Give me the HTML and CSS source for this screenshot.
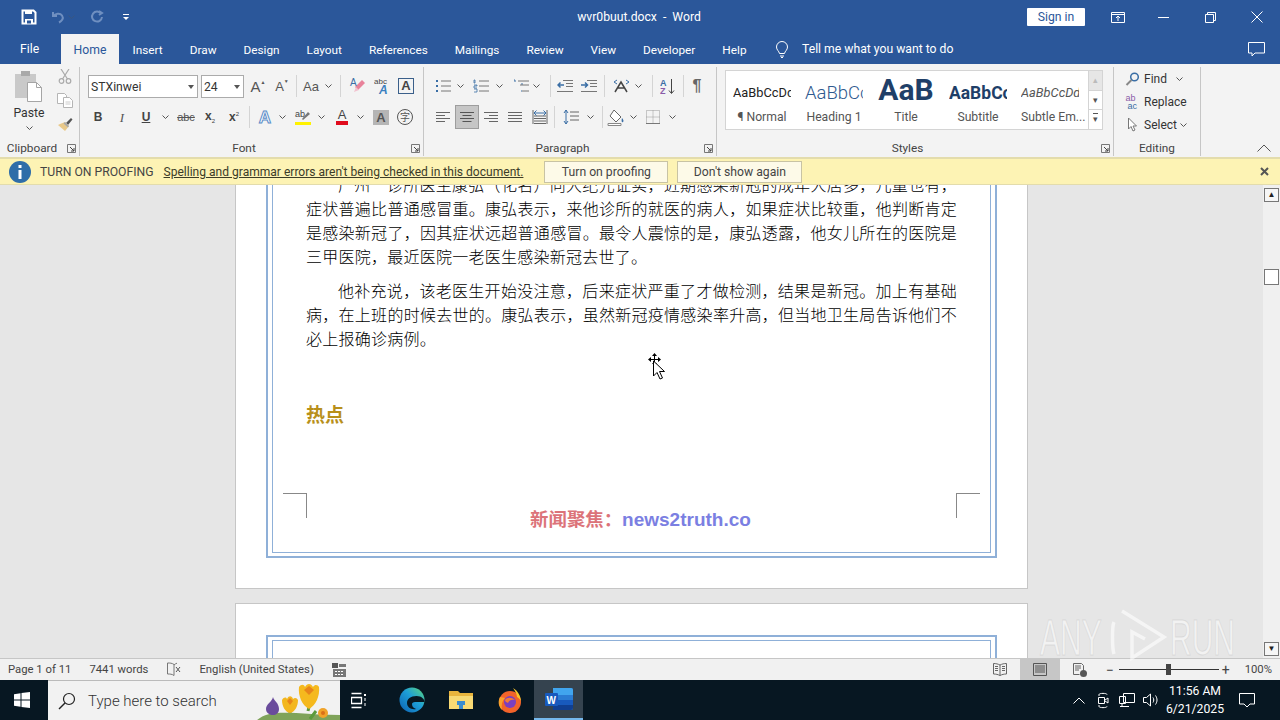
FILE: index.html
```html
<!DOCTYPE html>
<html lang="en">
<head>
  <meta charset="UTF-8">
  <title>wvr0buut.docx - Word</title>
  <link rel="stylesheet" href="styles.css">
</head>
<body>
  <svg class="defs" width="0" height="0">
    <symbol id="chev" viewBox="0 0 7 4"><path d="M.5.5 3.5 3.5 6.5.5" fill="none" stroke="#555" stroke-width="1"/></symbol>
    <symbol id="launch" viewBox="0 0 9 9"><path d="M.5.5h8v8h-8z" fill="none" stroke="#777"/><path d="M3 3l4 4M7 4v3H4" fill="none" stroke="#444"/></symbol>
  </svg>

  <header class="titlebar">
    <div class="qat">
      <svg class="qat-save" width="16" height="16" viewBox="0 0 16 16"><path d="M1.5 1.5h11l2 2v11h-13z" fill="none" stroke="#fff" stroke-width="2"/><path d="M4 1h7v4H4zM4 10h8v5H4z" fill="#fff"/><path d="M6 11.5h4v3H6z" fill="#2b579a"/></svg>
      <svg class="qat-undo" width="14" height="14" viewBox="0 0 14 14"><path d="M2 2v4h4M2.5 6C4 3.500 9 2.500 11 5.500S11 11 8 12.500" fill="none" stroke="#6f8fc0" stroke-width="2"/></svg>
      <svg class="qat-chev" width="7" height="4"><use href="#chev" opacity=".35"/></svg>
      <svg class="qat-redo" width="14" height="14" viewBox="0 0 14 14"><path d="M9 1l3 2-3 2M11 3.500A5 5 0 1 0 12 7" fill="none" stroke="#6f8fc0" stroke-width="2"/></svg>
      <svg class="qat-more" width="8" height="8" viewBox="0 0 8 8"><path d="M1 1h6v1H1z" fill="#fff"/><path d="M1 4h6L4 7z" fill="#fff"/></svg>
    </div>
    <div class="doc-title">wvr0buut.docx&nbsp; - &nbsp;Word</div>
    <div class="win-ctrl">
      <button class="signin">Sign in</button>
      <svg class="wc-display" width="14" height="11" viewBox="0 0 14 11"><path d="M.5.500h13v10H.500zM.5 2.500h13" fill="none" stroke="#fff"/><path d="M7 9V4M5 6l2-2 2 2" fill="none" stroke="#fff"/></svg>
      <svg class="wc-min" width="11" height="1"><path d="M0 .5h11" stroke="#fff"/></svg>
      <svg class="wc-max" width="11" height="11" viewBox="0 0 11 11"><path d="M.5 2.500h8v8h-8zM2.500 2.500v-2h8v8h-2" fill="none" stroke="#fff"/></svg>
      <svg class="wc-close" width="12" height="12" viewBox="0 0 12 12"><path d="M.5.500l11 11M11.500.500l-11 11" stroke="#fff"/></svg>
    </div>
  </header>

  <nav class="tabs">
    <span class="tab tab-file">File</span>
    <span class="tab tab-active">Home</span>
    <span class="tab">Insert</span>
    <span class="tab">Draw</span>
    <span class="tab">Design</span>
    <span class="tab">Layout</span>
    <span class="tab">References</span>
    <span class="tab">Mailings</span>
    <span class="tab">Review</span>
    <span class="tab">View</span>
    <span class="tab">Developer</span>
    <span class="tab">Help</span>
    <svg class="bulb" width="14" height="17" viewBox="0 0 14 17"><path d="M4.500 12.500C4 10 1.500 9 1.500 6a5.500 5.500 0 0 1 11 0c0 3-2.500 4-3 6.500zM5 15h4M6 16.500h2" fill="none" stroke="#fff"/></svg>
    <span class="tell">Tell me what you want to do</span>
    <svg class="comment" width="17" height="15" viewBox="0 0 17 15"><path d="M.5.500h16v10.500H7l-3 3v-3H.500z" fill="none" stroke="#fff"/></svg>
  </nav>

  <section class="ribbon">
    <div class="grp grp-clip">
      <div class="clip-body">
        <div class="paste">
          <svg width="28" height="32" viewBox="0 0 28 32"><path d="M0 4h21v24H0z" fill="#c9c9c9"/><path d="M6 1h9v5H6z" fill="#a9a9a9"/><path d="M12.500 12.500h9l5 5v14h-14z" fill="#fff" stroke="#a5a5a5"/><path d="M21.500 12.500v5h5" fill="none" stroke="#a5a5a5"/></svg>
          <span>Paste</span>
          <svg class="paste-chev" width="7" height="4"><use href="#chev"/></svg>
        </div>
        <div class="clip-tools">
          <svg width="14" height="15" viewBox="0 0 14 15"><path d="M3 0l6.500 10M11 0 4.500 10" stroke="#aaa" stroke-width="1.200" fill="none"/><circle cx="3.500" cy="12" r="2.300" fill="none" stroke="#aaa" stroke-width="1.200"/><circle cx="10.500" cy="12" r="2.300" fill="none" stroke="#aaa" stroke-width="1.200"/></svg>
          <svg width="16" height="15" viewBox="0 0 16 15"><path d="M.5.500h7l2 2v8H.500z" fill="#fff" stroke="#b5b5b5"/><path d="M6.500 4.500h6l3 3v7h-9z" fill="#fff" stroke="#b5b5b5"/><path d="M8.500 9h5M8.500 11h5" stroke="#ccc"/></svg>
          <svg width="16" height="15" viewBox="0 0 16 15"><path d="M9 6l5-5 1.500 1.500L11 8z" fill="#555"/><path d="M8 5l4 4-4 5-7-6 2-1z" fill="#e9c98a"/><path d="M8 5l4 4-1 1.500-4.500-4z" fill="#a8a8a8"/></svg>
        </div>
      </div>
      <div class="grp-label"><span class="lbl">Clipboard</span><svg class="launch" width="9" height="9"><use href="#launch"/></svg></div>
    </div>

    <div class="grp grp-font">
      <div class="rows">
        <div class="row">
          <div class="combo combo-font"><span>STXinwei</span><i class="caret"></i></div>
          <div class="combo combo-size"><span>24</span><i class="caret"></i></div>
          <span class="b ml2"><span class="glyph g-lg">A<sup class="tri">▲</sup></span></span>
          <span class="b"><span class="glyph g-md">A<sup class="tri">▼</sup></span></span>
          <i class="sep ml2"></i>
          <span class="b ml2"><span class="glyph g-aa">Aa</span></span>
          <span class="c"><svg width="7" height="4"><use href="#chev"/></svg></span>
          <i class="sep ml7"></i>
          <span class="b ml5"><svg width="18" height="18" viewBox="0 0 18 18"><path d="M9 13l7-7-3-3-7 7z" fill="#e8829a"/><path d="M5 15l2-5 3 3z" fill="#f2c2cf"/><text x="1" y="9" font-size="10" fill="#3a6ea5" font-family="Liberation Sans">A</text></svg></span>
          <span class="b"><svg width="16" height="18" viewBox="0 0 16 18"><text x="0" y="7" font-size="8" fill="#444" font-family="Liberation Sans">abc</text><text x="5" y="17" font-size="12" font-weight="700" font-style="italic" fill="#3a80c0" font-family="Liberation Sans">A</text></svg></span>
          <span class="b"><span class="boxed-a">A</span></span>
        </div>
        <div class="row row2">
          <span class="b"><b class="glyph g-b">B</b></span>
          <span class="b"><i class="glyph g-i">I</i></span>
          <span class="b"><span class="glyph g-u">U</span></span>
          <span class="c c14"><svg width="7" height="4"><use href="#chev"/></svg></span>
          <span class="b ml2"><span class="glyph g-s">abc</span></span>
          <span class="b"><span class="glyph g-x">x<sub>2</sub></span></span>
          <span class="b"><span class="glyph g-x">x<sup>2</sup></span></span>
          <i class="sep ml3"></i>
          <span class="b ml3"><span class="glyph g-eff">A</span></span>
          <span class="c"><svg width="7" height="4"><use href="#chev"/></svg></span>
          <span class="b20 ml6"><svg width="18" height="18" viewBox="0 0 18 18"><text x="1" y="9" font-size="9" fill="#444" font-family="Liberation Sans">ab</text><path d="M8 11l6-7 2 2-7 6z" fill="#777"/><path d="M1 14h16v3H1z" fill="#fff200"/></svg></span>
          <span class="c ml3"><svg width="7" height="4"><use href="#chev"/></svg></span>
          <span class="b20 ml6"><span class="glyph g-col">A</span></span>
          <span class="c ml3"><svg width="7" height="4"><use href="#chev"/></svg></span>
          <span class="b ml4"><span class="glyph g-shade">A</span></span>
          <span class="b"><span class="glyph g-enc">字</span></span>
        </div>
      </div>
      <div class="grp-label"><span class="lbl">Font</span><svg class="launch" width="9" height="9"><use href="#launch"/></svg></div>
    </div>

    <div class="grp grp-para">
      <div class="rows">
        <div class="row">
          <span class="b"><svg width="16" height="14" viewBox="0 0 16 14"><path d="M1 1h2v2H1zM1 6h2v2H1zM1 11h2v2H1z" fill="#3a6ea5"/><path d="M6 2h10M6 7h10M6 12h10" stroke="#777"/></svg></span>
          <span class="c"><svg width="7" height="4"><use href="#chev"/></svg></span>
          <span class="b20 ml6"><svg width="16" height="14" viewBox="0 0 16 14"><path d="M1 1h1v3H1zM1 6h3v1H1v2h3M1 10h3v3H1" fill="none" stroke="#3a6ea5" stroke-width=".8"/><path d="M6 2h10M6 7h10M6 12h10" stroke="#777"/></svg></span>
          <span class="c ml3"><svg width="7" height="4"><use href="#chev"/></svg></span>
          <span class="b20 ml7"><svg width="16" height="14" viewBox="0 0 16 14"><path d="M1 1h1v2M8 5h2M8 12h1" fill="none" stroke="#3a6ea5"/><path d="M5 2h11M7 6h9M9 12h7" stroke="#777"/></svg></span>
          <span class="c"><svg width="7" height="4"><use href="#chev"/></svg></span>
          <i class="sep ml9"></i>
          <span class="b ml2"><svg width="16" height="12" viewBox="0 0 16 12"><path d="M6 .5h10M9 3.500h7M9 6.500h7M0 11.500h16" stroke="#777"/><path d="M7 5H1M3.500 2.500 1 5l2.500 2.500" fill="none" stroke="#3a6ea5" stroke-width="1.500"/></svg></span>
          <span class="b"><svg width="16" height="12" viewBox="0 0 16 12"><path d="M6 .5h10M9 3.500h7M9 6.500h7M0 11.500h16" stroke="#777"/><path d="M0 5h6M4 2.500 6.500 5 4 7.500" fill="none" stroke="#3a6ea5" stroke-width="1.500"/></svg></span>
          <i class="sep ml3"></i>
          <span class="b ml4"><svg width="17" height="14" viewBox="0 0 17 14"><path d="M2 13 8 3l6 10M5 9h6" fill="none" stroke="#444" stroke-width="1.500"/><path d="M1 3l3-2M1 3l3 2M16 3l-3-2M16 3l-3 2" fill="none" stroke="#3a6ea5"/></svg></span>
          <span class="c"><svg width="7" height="4"><use href="#chev"/></svg></span>
          <i class="sep ml9"></i>
          <span class="b ml3"><svg width="16" height="17" viewBox="0 0 16 17"><text x="0" y="8" font-size="9" font-weight="700" fill="#3a6ea5" font-family="Liberation Sans">A</text><text x="0" y="16" font-size="9" font-weight="700" fill="#8a5ca8" font-family="Liberation Sans">Z</text><path d="M11.500 1v14M9 12.500l2.500 3 2.500-3" fill="none" stroke="#444"/></svg></span>
          <i class="sep ml3"></i>
          <span class="b ml1"><span class="glyph g-pil">¶</span></span>
        </div>
        <div class="row row2">
          <span class="b"><svg width="16" height="11" viewBox="0 0 16 11"><path d="M1 .5h14M1 3.500h9M1 6.500h14M1 9.500h9" stroke="#666"/></svg></span>
          <span class="b on"><svg width="16" height="11" viewBox="0 0 16 11"><path d="M1 .5h14M3.500 3.500h9M1 6.500h14M3.500 9.500h9" stroke="#555"/></svg></span>
          <span class="b"><svg width="16" height="11" viewBox="0 0 16 11"><path d="M1 .5h14M6 3.500h9M1 6.500h14M6 9.500h9" stroke="#666"/></svg></span>
          <span class="b"><svg width="16" height="11" viewBox="0 0 16 11"><path d="M1 .5h14M1 3.500h14M1 6.500h14M1 9.500h14" stroke="#666"/></svg></span>
          <span class="b ml1"><svg width="16" height="16" viewBox="0 0 16 16"><path d="M1 1v14M15 1v14M2 7h12M2 9.500h12M2 12h12M2 14.500h12" stroke="#666" fill="none"/><path d="M2 4h12M4.500 1.500 2 4l2.500 2.500M11.500 1.500 14 4l-2.500 2.500" fill="none" stroke="#3a6ea5"/></svg></span>
          <i class="sep ml2"></i>
          <span class="b ml4"><svg width="16" height="16" viewBox="0 0 16 16"><path d="M3 1v14M1 4l2-3 2 3M1 12l2 3 2-3" fill="none" stroke="#3a6ea5"/><path d="M7 3h9M7 7h9M7 11h9" stroke="#666"/></svg></span>
          <span class="c ml2"><svg width="7" height="4"><use href="#chev"/></svg></span>
          <i class="sep ml7"></i>
          <span class="b20 ml3"><svg width="18" height="17" viewBox="0 0 18 17"><path d="M7 1l7 7-5 5-6-6z" fill="#fff" stroke="#666"/><path d="M15 9c1.500 2 2 3 1 4s-2-.500-1-4z" fill="#3a6ea5"/><path d="M1 14.500h13v2H1z" fill="#fff" stroke="#888"/></svg></span>
          <span class="c ml2"><svg width="7" height="4"><use href="#chev"/></svg></span>
          <span class="b20 ml5"><svg width="14" height="14" viewBox="0 0 14 14"><path d="M.5.500h13v13H.500zM7 .500v13M.5 7h13" fill="none" stroke="#999" stroke-dasharray="1 1"/><path d="M0 13.500h14" stroke="#777"/></svg></span>
          <span class="c ml4"><svg width="7" height="4"><use href="#chev"/></svg></span>
        </div>
      </div>
      <div class="grp-label"><span class="lbl">Paragraph</span><svg class="launch" width="9" height="9"><use href="#launch"/></svg></div>
    </div>

    <div class="grp grp-styles">
      <div class="gallery">
        <div class="style-item"><div class="sample s-normal">AaBbCcDd</div><div class="style-name">¶ Normal</div></div>
        <div class="style-item"><div class="sample s-h1">AaBbCc</div><div class="style-name">Heading 1</div></div>
        <div class="style-item"><div class="sample s-title">AaB</div><div class="style-name">Title</div></div>
        <div class="style-item"><div class="sample s-sub">AaBbCc</div><div class="style-name">Subtitle</div></div>
        <div class="style-item"><div class="sample s-em">AaBbCcDd</div><div class="style-name">Subtle Em...</div></div>
        <div class="gal-scroll">
          <span class="gs gs-off">▴</span>
          <span class="gs">▾</span>
          <span class="gs gs-more">▾</span>
        </div>
      </div>
      <div class="grp-label"><span class="lbl">Styles</span><svg class="launch" width="9" height="9"><use href="#launch"/></svg></div>
    </div>

    <div class="grp grp-edit">
      <div class="edit-rows">
        <div class="edit-row"><svg width="14" height="14" viewBox="0 0 14 14"><circle cx="9" cy="5" r="3.800" fill="none" stroke="#3a6ea5" stroke-width="1.500"/><path d="M6 8l-5 5" stroke="#888" stroke-width="2"/></svg><span>Find</span><svg class="chev-find" width="7" height="4"><use href="#chev"/></svg></div>
        <div class="edit-row"><svg width="16" height="16" viewBox="0 0 16 16"><text x="1" y="7" font-size="9" fill="#8a5ca8" font-family="Liberation Sans">ab</text><text x="3" y="15" font-size="9" fill="#3a6ea5" font-family="Liberation Sans">ac</text></svg><span>Replace</span></div>
        <div class="edit-row"><svg width="11" height="15" viewBox="0 0 11 15"><path d="M1.500 1v11l2.500-2.500 2 4.500 2-1-2-4h3.500z" fill="#fff" stroke="#777"/></svg><span>Select</span><svg width="7" height="4"><use href="#chev"/></svg></div>
      </div>
      <div class="grp-label"><span class="lbl">Editing</span></div>
    </div>

    <svg class="collapse" width="14" height="8" viewBox="0 0 14 8"><path d="M.5 7.500 7 1l6.500 6.500" fill="none" stroke="#555"/></svg>
  </section>

  <section class="proofbar">
    <svg width="22" height="22" viewBox="0 0 22 22"><circle cx="11" cy="11" r="11" fill="#2f6da8"/><path d="M9.500 4h3v3h-3zM9.500 9h3v9h-3z" fill="#fff"/></svg>
    <strong class="proof-title">TURN ON PROOFING</strong>
    <a class="proof-link">Spelling and grammar errors aren't being checked in this document.</a>
    <button class="proof-btn btn-on">Turn on proofing</button>
    <button class="proof-btn btn-dont">Don't show again</button>
    <svg class="proof-x" width="9" height="9" viewBox="0 0 9 9"><path d="M1 1l7 7M8 1 1 8" stroke="#555" stroke-width="2"/></svg>
  </section>

  <main class="docarea">
    <div class="pages">
      <article class="page page-one">
        <div class="frame">
          <div class="frame-in">
            <p class="body-p">广州一诊所医生康弘（化名）向大纪元证实，近期感染新冠的成年人居多，儿童也有，症状普遍比普通感冒重。康弘表示，来他诊所的就医的病人，如果症状比较重，他判断肯定是感染新冠了，因其症状远超普通感冒。最令人震惊的是，康弘透露，他女儿所在的医院是三甲医院，最近医院一老医生感染新冠去世了。</p>
            <p class="body-p">他补充说，该老医生开始没注意，后来症状严重了才做检测，结果是新冠。加上有基础病，在上班的时候去世的。康弘表示，虽然新冠疫情感染率升高，但当地卫生局告诉他们不必上报确诊病例。</p>
            <h3 class="hot">热点</h3>
            <div class="page-foot">
              <i class="crop crop-l"></i>
              <div class="foot-text"><span class="foot-cn">新闻聚焦：</span><span class="foot-en">news2truth.co</span></div>
              <i class="crop crop-r"></i>
            </div>
          </div>
        </div>
      </article>
      <article class="page page-two">
        <div class="frame"><div class="frame-in"></div></div>
      </article>
    </div>
    <aside class="vscroll">
      <span class="sb-btn">▲</span>
      <span class="sb-thumb"></span>
      <span class="sb-btn sb-down">▼</span>
    </aside>
  </main>

  <footer class="status">
    <span class="st-page">Page 1 of 11</span>
    <span class="st-words">7441 words</span>
    <svg class="st-proof" width="14" height="15" viewBox="0 0 14 15"><path d="M7 2.500C5 1 3 1 .5 1v11c2.500 0 4.500 0 6.500 1.500V2.500M7 3c1-1 2-1.500 3-1.800" fill="none" stroke="#777"/><path d="M9 5l4 5M13 5l-4 5" stroke="#555"/></svg>
    <span class="st-lang">English (United States)</span>
    <svg class="st-macro" width="14" height="14" viewBox="0 0 14 14"><path d="M0 0h6v5H0z" fill="#555"/><path d="M7 1h7v3H7zM1 6h13v8H1z" fill="#777"/><path d="M3 8h2v1H3zM6 8h2v1H6zM9 8h2v1H9zM3 11h2v1H3zM6 11h2v1H6zM9 11h2v1H9z" fill="#fff"/></svg>
    <div class="st-right">
      <span class="view"><svg width="14" height="13" viewBox="0 0 14 13"><path d="M7 2C5 1 3 .5 .5 .5v10.500C3 11 5 11.500 7 12.500 9 11.500 11 11 13.500 11V.500C11 .500 9 1 7 2zM7 2v10.500M2 3.500h3M2 5.500h3M2 7.500h3M9 3.500h3M9 5.500h3M9 7.500h3" fill="none" stroke="#666"/></svg></span>
      <span class="view view-on"><svg width="14" height="13" viewBox="0 0 14 13"><path d="M.5.500h13v12H.500zM2 3h10M2 5h10M2 7h10M2 9h10" fill="none" stroke="#555"/></svg></span>
      <span class="view"><svg width="14" height="14" viewBox="0 0 14 14"><path d="M.5.500h8l2 2v5M.5.500v11h6M2 3h6M2 5h6M2 7h4" fill="none" stroke="#666"/><circle cx="10.500" cy="10.500" r="3.500" fill="#555"/></svg></span>
      <span class="zoom-minus">−</span>
      <span class="zoom-track"><i class="zoom-thumb"></i></span>
      <span class="zoom-plus">+</span>
      <span class="zoom-pct">100%</span>
    </div>
  </footer>

  <footer class="taskbar">
    <span class="start"><svg width="16" height="16" viewBox="0 0 16 16"><path d="M0 2.200 6.500 1.300V7.500H0zM7.500 1.100 16 0v7.500H7.500zM0 8.500h6.500v6.200L0 13.800zM7.500 8.500H16V16L7.500 14.900z" fill="#fff"/></svg></span>
    <div class="search">
      <svg width="18" height="18" viewBox="0 0 18 18"><circle cx="11" cy="7" r="5.500" fill="none" stroke="#222" stroke-width="1.200"/><path d="M7 11l-6 6" stroke="#222" stroke-width="1.400"/></svg>
      <span>Type here to search</span>
      <svg class="flowers" width="84" height="40" viewBox="0 0 84 40"><path d="M0 40c8-8 20-9 40-8 16 1 30 2 44 2v6z" fill="#7fa35a"/><path d="M17 16c1 4 6 6 6 12 0 4-3 6-6 6s-7-2-7-6c0-5 6-7 7-12z" fill="#6a4c9c"/><path d="M34 32v-8M52 30l2-8M60 30l-6 8" stroke="#5c9a3c" stroke-width="3" fill="none"/><path d="M26 19c2-3 4-3 5-1 2-4 5-3 6 0 2-2 4-1 5 1 0 6-3 12-8 13-5-1-8-7-8-13z" fill="#f3b71f"/><path d="M31 20l3-3 3 3-3 4z" fill="#e8851a"/><path d="M43 6c2-3 5-3 6 0 2-4 6-4 8 0 2-3 5-2 6 0 1 9-3 18-10 22-7-4-11-13-10-22z" fill="#f5b91e"/><path d="M48 9l5-4 5 4-5 5z" fill="#e8851a"/><circle cx="67" cy="32" r="5" fill="#f0a32a"/><circle cx="67" cy="32" r="2" fill="#d9701a"/></svg>
    </div>
    <span class="tb-app"><svg width="16" height="17" viewBox="0 0 16 17"><path d="M.5 5.500h10v6H.500zM.5 1.500h10M.5 15.500h10" fill="none" stroke="#fff" stroke-width="1.300"/><path d="M13 2h2v2h-2z" fill="#fff"/><path d="M14 6v9" stroke="#fff" stroke-dasharray="3 2"/></svg></span>
    <span class="tb-app"><svg width="26" height="26" viewBox="0 0 26 26"><defs><linearGradient id="eg" x1="0" y1="1" x2="1" y2="0"><stop offset="0" stop-color="#0c5fb0"/><stop offset=".55" stop-color="#1d9ed8"/><stop offset="1" stop-color="#5ed87a"/></linearGradient></defs><circle cx="13" cy="13" r="12.500" fill="url(#eg)"/><path d="M25.500 15c0-3-3-6-8-6-6 0-9.500 3-9.500 7s4 7 9 6c-3-1-4-3-4-5 0-1 1-2 3-2z" fill="#071722"/></svg></span>
    <span class="tb-app"><svg width="24" height="20" viewBox="0 0 24 20"><path d="M0 1h9l2 2h13v16H0z" fill="#e9b53d"/><path d="M0 6h24v13H0z" fill="#f8da74"/><path d="M8 11h8v4H8zM10 15h4v4h-4z" fill="#3a8ccf"/></svg></span>
    <span class="tb-app"><svg width="24" height="25" viewBox="0 0 24 25"><circle cx="12" cy="14" r="11" fill="#f2632a"/><path d="M15 0c5 3 8 8 8 14 0-2-2-4-4-5 0-3-2-6-4-9z" fill="#f9c62b"/><path d="M2 9C0 13 0 18 4 22 3 17 4 13 7 10z" fill="#f9a02b"/><circle cx="12" cy="14" r="6" fill="#7b3fc0"/><path d="M7 12c2-3 7-3 10 0-3-1-6 0-7 3-1-1-3-1-3-3z" fill="#f27a3a"/></svg></span>
    <span class="tb-app tb-word"><svg width="28" height="22" viewBox="0 0 28 22"><path d="M8 0h18a2 2 0 0 1 2 2v18a2 2 0 0 1-2 2H8z" fill="#2b7cd3"/><path d="M8 0h18a2 2 0 0 1 2 2v5H8z" fill="#41a5ee"/><path d="M8 12h20v5H8z" fill="#185abd"/><path d="M8 17h20v3a2 2 0 0 1-2 2H8z" fill="#103f91"/><rect x="0" y="5" width="13" height="13" rx="1" fill="#185abd"/><text x="1.500" y="15.500" font-size="10" font-weight="700" fill="#fff" font-family="Liberation Sans">W</text></svg></span>
    <div class="tray">
      <span class="tray-ic"><svg width="12" height="7" viewBox="0 0 12 7"><path d="M.5 6.500 6 1l5.500 5.500" fill="none" stroke="#fff"/></svg></span>
      <span class="tray-ic"><svg width="12" height="17" viewBox="0 0 12 17"><path d="M2 4V2.500C2 1 10 1 10 2.500M2 13v1.500c0 1.500 8 1.500 8 0" fill="none" stroke="#fff"/><path d="M1.500 5.500h6v6h-6zM8 8l3-2v5l-3-2" fill="none" stroke="#fff"/></svg></span>
      <span class="tray-ic"><svg width="16" height="14" viewBox="0 0 16 14"><path d="M4.500.500h11v9h-11zM.5 3.500h6v7h-6zM3 10.500v3M1 13.500h9" fill="#071722" stroke="#fff"/></svg></span>
      <span class="tray-ic"><svg width="16" height="14" viewBox="0 0 16 14"><path d="M.5 4.500h3L7.500 1v12l-4-3.500h-3zM10 4.500c1 1.500 1 3.500 0 5M12.500 2.500c2 3 2 6 0 9" fill="none" stroke="#fff"/></svg></span>
      <div class="clock"><div>11:56 AM</div><div>6/21/2025</div></div>
      <span class="notif"><svg width="16" height="15" viewBox="0 0 16 15"><path d="M.5.500h15v10.500H11L8 14l-3-3H.500z" fill="none" stroke="#fff"/></svg></span>
    </div>
  </footer>

  <svg class="cursor" width="20" height="28" viewBox="0 0 20 28"><path d="M8.500 0l-2.500 3h5zM8.500 13 6 10h5zM2 6.500l3-2.500v5zM15 6.500 12 4v5z" fill="#000"/><path d="M8.500 1v11M3 6.500h11" stroke="#000"/><path d="M7.500 8v15l3.500-3.500 3 6.500 2.500-1-3-6.500h5z" fill="#fff" stroke="#000"/></svg>
  <div class="watermark">
    <span class="wm-word">ANY</span>
    <svg width="60" height="60" viewBox="0 0 60 60"><path d="M4 14C2 18 2 40 4 46M12 3 54 29 22 50 V24l13 7" fill="none" stroke="#fff" stroke-opacity=".6" stroke-width="3.500"/></svg>
    <span class="wm-word">RUN</span>
  </div>
</body>
</html>
```

FILE: styles.css
```css
* {
  box-sizing: border-box;
}

html, body {
  margin: 0;
  height: 100%;
}

body {
  width: 1280px;
  height: 720px;
  overflow: hidden;
  display: flex;
  flex-direction: column;
  position: relative;
  font-family: Roboto, 'Noto Sans', sans-serif;
  font-size: 12.2px;
  color: #333;
  background: #e6e6e6;
}

.defs {
  position: absolute;
}

button {
  font-family: inherit;
}

/* title bar */
.titlebar {
  height: 34px;
  flex: none;
  background: #2b579a;
  color: #fff;
  display: flex;
  align-items: center;
  position: relative;
}

.qat {
  display: flex;
  align-items: center;
  padding-left: 21px;
}

.qat-undo { margin-left: 14px; }
.qat-chev { margin-left: 3px; }
.qat-redo { margin-left: 15px; }
.qat-more { margin-left: 18px; }

.doc-title {
  position: absolute;
  left: 0;
  right: 2px;
  text-align: center;
}

.win-ctrl {
  margin-left: auto;
  display: flex;
  align-items: center;
}

.signin {
  width: 58px;
  height: 18px;
  padding: 0;
  background: #fff;
  border: 0;
  color: #2b579a;
  font-size: 12.2px;
  line-height: 18px;
  border-radius: 1px;
}

.wc-display { margin-left: 26px; }
.wc-min { margin-left: 33px; }
.wc-max { margin-left: 36px; }
.wc-close { margin-left: 35px; margin-right: 17px; }

/* tabs */
.tabs {
  height: 30px;
  flex: none;
  background: #2b579a;
  color: #fff;
  display: flex;
  align-items: center;
  padding-left: 7px;
}

.tab {
  padding: 0 13.500px;
  height: 30px;
  line-height: 32px;
  font-size: 11.800px;
}

.tab-file {
  padding: 0 13px;
  width: 54px;
  line-height: 30px;
  font-size: 12.2px;
}

.tab-active {
  background: #f3f3f3;
  color: #2b579a;
  width: 58px;
  padding: 0;
  text-align: center;
  font-size: 12.2px;
}

.bulb { margin-left: 15px; }

.tell {
  margin-left: 13px;
}

.comment {
  margin-left: auto;
  margin-right: 15px;
}

/* ribbon */
.ribbon {
  height: 93px;
  flex: none;
  background: #f3f3f3;
  display: flex;
  position: relative;
}

.grp {
  display: flex;
  flex-direction: column;
  position: relative;
  height: 89px;
  border-right: 1px solid #c6c6c6;
  margin-top: 3px;
}

.grp-clip { width: 80px; }
.grp-font { width: 344px; padding-left: 6px; }
.grp-para { width: 293px; padding-left: 7px; }
.grp-styles { width: 397px; padding-left: 8px; }
.grp-edit { width: 87px; padding-left: 9px; }

.rows {
  padding-top: 7px;
  flex: 1;
}

.row {
  display: flex;
  align-items: center;
  height: 24px;
}

.row2 {
  margin-top: 7px;
}

.grp-label {
  display: flex;
  align-items: center;
  height: 16px;
  margin-top: auto;
  font-size: 11.800px;
  color: #444;
}

.grp-font .grp-label { margin-left: -6px; }
.grp-para .grp-label { margin-left: -7px; }
.grp-styles .grp-label { margin-left: -8px; }
.grp-edit .grp-label { margin-left: -9px; }

.lbl {
  flex: 1;
  text-align: center;
}

.launch {
  margin-left: 3px;
  margin-right: 3px;
  width: 9px;
  flex: none;
}

.b, .b20, .c {
  display: flex;
  align-items: center;
  justify-content: center;
  flex: none;
  height: 24px;
}

.b { width: 24px; }
.b20 { width: 20px; }
.c { width: 10px; }
.c14 { width: 14px; }

.on {
  background: #c6c6c6;
  border: 1px solid #9d9d9d;
}

.sep {
  width: 1px;
  height: 22px;
  background: #d4d4d4;
  flex: none;
}

.ml1 { margin-left: 1px; }
.ml2 { margin-left: 2px; }
.ml3 { margin-left: 3px; }
.ml4 { margin-left: 4px; }
.ml5 { margin-left: 5px; }
.ml6 { margin-left: 6px; }
.ml7 { margin-left: 7px; }
.ml9 { margin-left: 9px; }

.combo {
  height: 23px;
  background: #fff;
  border: 1px solid #ababab;
  display: flex;
  align-items: center;
  padding-left: 2px;
  padding-top: 1px;
  color: #333;
  flex: none;
  position: relative;
}

.combo-font { width: 110px; margin-left: 2px; }
.combo-size { width: 43px; margin-left: 3px; }

.caret {
  margin-left: auto;
  margin-right: 3px;
  width: 0;
  height: 0;
  border: 3px solid transparent;
  border-top: 4px solid #555;
  border-bottom: 0;
}

.glyph {
  font-family: 'Liberation Sans', sans-serif;
  color: #555;
  line-height: 1;
  white-space: nowrap;
}

.g-lg { font-size: 15px; }
.g-md { font-size: 13px; }
.tri { font-size: 5px; vertical-align: 8px; line-height: 0; }
.g-aa { font-size: 13px; }
.boxed-a {
  width: 16px;
  height: 16px;
  border: 1.500px solid #3a5f8a;
  font: 700 13px/13px 'Liberation Sans', sans-serif;
  text-align: center;
  color: #444;
}
.g-b { font-size: 12px; font-weight: 700; color: #444; }
.g-i { font-size: 13px; font-style: italic; font-family: 'Liberation Serif', serif; }
.g-u { font-size: 12px; font-weight: 700; text-decoration: underline; color: #444; }
.g-s { font-size: 11px; text-decoration: line-through; }
.g-x { font-size: 12px; font-weight: 700; color: #444; }
.g-x sub, .g-x sup { font-size: 6px; font-weight: 400; }
.g-eff { font-size: 17px; font-weight: 700; color: #fff; -webkit-text-stroke: 1px #5b8cc8; }
.g-col { font-size: 13px; color: #444; border-bottom: 4px solid #e00b1c; line-height: 12px; padding: 0 2px; }
.g-shade { font-size: 13px; font-weight: 700; background: #b5b5b5; padding: 1px 3px; }
.g-enc {
  width: 16px;
  height: 16px;
  border: 1px solid #555;
  border-radius: 50%;
  font: 10px/14px 'Noto Sans CJK SC', sans-serif;
  text-align: center;
}
.g-pil { font-size: 16px; font-weight: 700; color: #666; }

/* clipboard */
.clip-body {
  display: flex;
  height: 70px;
}

.paste {
  width: 58px;
  padding-top: 3px;
  display: flex;
  flex-direction: column;
  align-items: center;
}

.paste span { margin-top: 3px; line-height: 17px; }
.paste-chev { margin-top: 4px; }

.clip-tools {
  padding-top: 2px;
  width: 14px;
  display: flex;
  flex-direction: column;
  align-items: center;
  gap: 9px;
}

/* styles gallery */
.gallery {
  height: 60px;
  width: 378px;
  margin-top: 3px;
  background: #fff;
  border: 1px solid #d4d4d4;
  display: flex;
}

.style-item {
  width: 72px;
  flex: none;
  overflow: hidden;
  padding: 0 7px;
  text-align: center;
}

.sample {
  height: 39px;
  display: flex;
  align-items: center;
  justify-content: center;
  white-space: nowrap;
  overflow: hidden;
  color: #222;
}

.s-normal { font-size: 12.800px; padding-top: 4px; justify-content: flex-start; }
.s-h1 { font-size: 18.500px; font-weight: 300; color: #2f5a8f; padding-top: 4px; justify-content: flex-start; }
.s-title { font-size: 30px; font-weight: 700; color: #1f3f68; padding-bottom: 2px; }
.s-sub { font-size: 17.500px; font-weight: 700; color: #1f3f68; padding-top: 4px; justify-content: flex-start; }
.s-em { font-size: 12.800px; font-style: italic; color: #555; padding-top: 4px; justify-content: flex-start; }

.style-name {
  color: #555;
  white-space: nowrap;
}

.gal-scroll {
  margin-left: auto;
  width: 14px;
  border-left: 1px solid #d4d4d4;
  display: flex;
  flex-direction: column;
}

.gs {
  flex: 1;
  font-size: 9px;
  line-height: 18px;
  text-align: center;
  color: #555;
  border-bottom: 1px solid #d4d4d4;
}

.gs-off {
  background: #e6e6e6;
  color: #bbb;
}

.gs-more { border-bottom: 0; text-decoration: overline; }

/* editing */
.edit-rows {
  flex: 1;
}

.edit-row {
  height: 23px;
  display: flex;
  align-items: center;
  gap: 3px;
  padding-left: 1px;
  font-size: 12px;
}

.edit-row svg:first-child {
  flex: none;
  width: 17px;
}

.chev-find {
  margin-left: 6px;
}

.collapse {
  margin-left: auto;
  margin-right: 9px;
  align-self: flex-end;
  margin-bottom: 5px;
}

/* proofing message bar */
.proofbar {
  height: 28px;
  flex: none;
  background: #fdf3b4;
  border-top: 2px solid #e3dcac;
  border-bottom: 1px solid #e3dcac;
  display: flex;
  align-items: center;
  padding-left: 9px;
  position: relative;
  z-index: 2;
  color: #444;
}

.proof-title {
  margin-left: 9px;
  font-weight: 400;
}

.proof-link {
  margin-left: 10px;
  font-size: 12.060px;
  text-decoration: underline;
  color: #3c3c28;
}

.proof-btn {
  height: 22px;
  padding: 0;
  background: #fdfae8;
  border: 1px solid #c8c3a4;
  color: #444;
  font-size: 12.2px;
}

.btn-on { width: 124px; margin-left: 21px; }
.btn-dont { width: 125px; margin-left: 9px; }

.proof-x {
  margin-left: auto;
  margin-right: 11px;
}

/* document */
.docarea {
  flex: 1;
  min-height: 0;
  display: flex;
  overflow: hidden;
  background: #e6e6e6;
}

.pages {
  width: 1263px;
  flex: none;
  margin-top: -30px;
}

.page {
  width: 793px;
  margin: 0 auto;
  background: #fff;
  border: 1px solid #c6c6c6;
  padding: 0 30px 30px;
}

.page-two {
  margin-top: 14px;
  padding-top: 31px;
  height: 200px;
}

.frame {
  border: 2px solid #8fb0d8;
  padding: 3px 4px;
}

.frame-in {
  border: 1px solid #8fb0d8;
  padding: 10px 33px 17px;
  height: 100%;
}

.body-p {
  margin: 0 0 10px;
  font-family: 'Noto Sans CJK SC', sans-serif;
  font-weight: 300;
  font-size: 16px;
  letter-spacing: .25px;
  line-height: 24px;
  text-align: justify;
  text-indent: 2em;
  color: #000;
}

.hot {
  margin: 52px 0 0;
  font-family: 'Noto Sans CJK SC', sans-serif;
  font-size: 19px;
  font-weight: 700;
  line-height: 24px;
  color: #b8901a;
}

.page-foot {
  margin: 67px -23px 0;
  display: flex;
  justify-content: space-between;
  align-items: flex-start;
}

.crop {
  width: 24px;
  height: 25px;
  flex: none;
}

.crop-l {
  border-top: 1px solid #888;
  border-right: 1px solid #888;
}

.crop-r {
  border-top: 1px solid #888;
  border-left: 1px solid #888;
}

.foot-text {
  margin-top: 12px;
  padding-left: 18px;
  line-height: 26px;
  font-weight: 700;
  white-space: nowrap;
}

.foot-cn {
  font-family: 'Noto Sans CJK SC', sans-serif;
  font-size: 18.400px;
  color: #dc7379;
}

.foot-en {
  font-family: 'Liberation Sans', sans-serif;
  font-size: 19px;
  color: #7b7fe2;
}

.vscroll {
  width: 17px;
  flex: none;
  background: #f0f0f0;
  display: flex;
  flex-direction: column;
  align-items: center;
  padding-top: 3px;
  padding-bottom: 2px;
}

.sb-btn {
  width: 15px;
  height: 14px;
  flex: none;
  background: #f6f6f6;
  border: 1px solid #777;
  font-size: 8px;
  line-height: 12px;
  text-align: center;
  color: #222;
}

.sb-thumb {
  width: 15px;
  height: 16px;
  margin-top: 67px;
  flex: none;
  background: #fff;
  border: 1px solid #777;
}

.sb-down { margin-top: auto; }

/* status bar */
.status {
  height: 22px;
  flex: none;
  background: #f1f1f1;
  border-top: 1px solid #c6c6c6;
  display: flex;
  align-items: center;
  padding-left: 8px;
  font-size: 11.300px;
  color: #444;
}

.st-words { margin-left: 18px; }
.st-proof { margin-left: 19px; }
.st-lang { margin-left: 18px; }
.st-macro { margin-left: 18px; }

.st-right {
  margin-left: auto;
  display: flex;
  align-items: center;
  height: 100%;
}

.view {
  width: 40px;
  height: 100%;
  display: flex;
  align-items: center;
  justify-content: center;
}

.view-on { background: #c6c6c6; }

.zoom-minus, .zoom-plus {
  font-size: 14px;
  line-height: 14px;
  color: #444;
}

.zoom-minus { margin-left: 6px; }
.zoom-plus { margin-left: 3px; }

.zoom-track {
  width: 100px;
  height: 1px;
  margin-left: 5px;
  background: #333;
  position: relative;
}

.zoom-thumb {
  position: absolute;
  left: 47px;
  top: -5px;
  width: 5px;
  height: 11px;
  background: #444;
}

.zoom-pct {
  margin-left: 15px;
  margin-right: 8px;
}

/* task bar */
.taskbar {
  height: 40px;
  flex: none;
  background: #071722;
  display: flex;
  align-items: center;
  color: #fff;
}

.start {
  width: 48px;
  display: flex;
  justify-content: center;
  margin-left: -2px;
  margin-right: 2px;
}

.search {
  width: 292px;
  height: 40px;
  background: #f2f2f2;
  display: flex;
  align-items: center;
  padding-left: 10px;
  overflow: hidden;
  color: #333;
  border-top: 1px solid #bbb;
}

.search span {
  margin-left: 12px;
  font-size: 15px;
  font-weight: 300;
}

.flowers {
  margin-left: auto;
  flex: none;
}

.tb-app {
  width: 49px;
  height: 40px;
  display: flex;
  align-items: center;
  justify-content: center;
  flex: none;
}

.search + .tb-app { margin-left: -6px; }
.search + .tb-app + .tb-app { margin-left: 4px; }

.tb-word {
  background: #35434f;
  border-bottom: 2px solid #76b9ed;
}

.tray {
  margin-left: auto;
  display: flex;
  align-items: center;
  padding-right: 13px;
}

.tray-ic {
  width: 24px;
  display: flex;
  justify-content: center;
}

.clock {
  width: 64px;
  font-size: 12.2px;
  line-height: 18px;
  text-align: center;
}

.notif {
  width: 40px;
  display: flex;
  justify-content: center;
}

/* overlays */
.cursor {
  position: absolute;
  left: 646px;
  top: 353px;
  z-index: 5;
}

.watermark {
  position: absolute;
  left: 1040px;
  top: 608px;
  z-index: 6;
  display: flex;
  align-items: center;
  pointer-events: none;
}

.wm-word {
  width: 70px;
  transform: scaleX(.6);
  transform-origin: left center;
  font-family: 'Liberation Sans', sans-serif;
  font-size: 50px;
  line-height: 60px;
  white-space: nowrap;
  color: rgba(255,255,255,.5);
  -webkit-text-stroke: 1px rgba(190,190,190,.4);
}
```
